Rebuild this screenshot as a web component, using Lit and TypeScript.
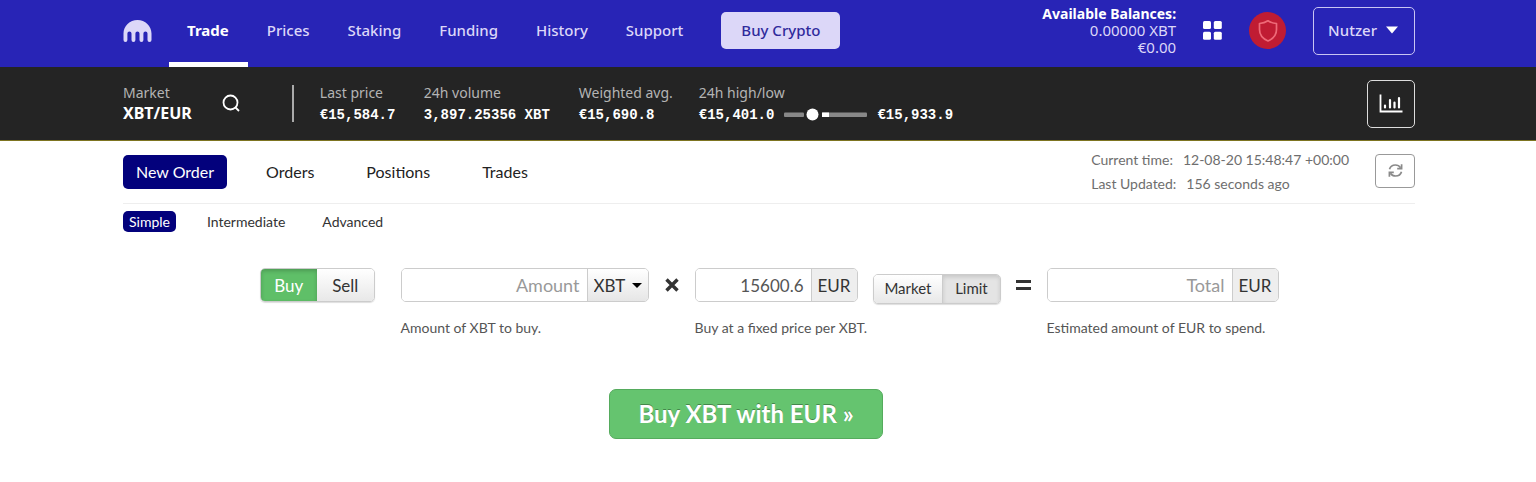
import { LitElement, html, css, svg } from "lit";
import { customElement, state } from "lit/decorators.js";
import { classMap } from "lit/directives/class-map.js";

const krakenLogo = svg`<svg width="29" height="22" viewBox="0 0 29 22" aria-hidden="true">
  <path fill="#dcd7f8" d="M14.500 0C6.800 0 .5 6 .5 13.500V20a1.900 1.900 0 0 0 3.900 0V13.500a2.050 2.050 0 0 1 4.100 0V20a1.950 1.950 0 0 0 3.900 0V13.500a2.050 2.050 0 0 1 4.100 0V20a1.950 1.950 0 0 0 3.900 0V13.500a2.050 2.050 0 0 1 4.100 0V20a1.950 1.950 0 0 0 4 0V13.500C28.500 6 22.200 0 14.500 0z"/></svg>`;

const searchIcon = svg`<svg width="19" height="19" viewBox="0 0 19 19" fill="none" stroke="#fff" stroke-width="1.800" aria-hidden="true">
  <circle cx="8.500" cy="8.500" r="7"/><path d="M13.500 13.500L17 17"/></svg>`;

const appsIcon = svg`<svg width="19" height="19" viewBox="0 0 19 19" fill="#fff" aria-hidden="true">
  <rect width="8" height="8" rx="1.500"/><rect x="10.800" width="8" height="8" rx="1.500"/>
  <rect y="10.800" width="8" height="8" rx="1.500"/><rect x="10.800" y="10.800" width="8" height="8" rx="1.500"/></svg>`;

const shieldIcon = svg`<svg width="20" height="24" viewBox="0 0 20 24" fill="none" stroke="#ee6a78" stroke-width="1.700" stroke-linejoin="round" aria-hidden="true">
  <path d="M10 1.800C7.500 3.400 4.500 4.300 1.500 4.500V10.500C1.500 15.500 5 19.800 10 22C15 19.800 18.500 15.500 18.500 10.500V4.500C15.500 4.300 12.500 3.400 10 1.800z"/></svg>`;

const chartIcon = svg`<svg width="24" height="20" viewBox="0 0 24 20" fill="none" stroke="#fff" stroke-width="1.800" aria-hidden="true">
  <path d="M1.500 .5V17.500H23.500"/><path stroke-width="2.200" stroke-linecap="round" d="M6 11.500V13.500M11 6V13.500M15.500 8.500V13.500M20 4V13.500"/></svg>`;

const refreshIcon = svg`<svg width="15" height="15" viewBox="0 0 15 15" fill="none" stroke="#8a8a8a" stroke-width="1.700" aria-hidden="true">
  <path d="M1.500 6.300C2.300 3.500 4.600 2 7.400 2C9.700 2 11.400 3 12.600 4.800M13.500 8.700C12.700 11.500 10.400 13 7.600 13C5.300 13 3.600 12 2.400 10.200"/>
  <path d="M13.600 1.200V5.600H9.200M1.400 13.800V9.400H5.800"/></svg>`;

const timesIcon = svg`<svg width="14" height="14" viewBox="0 0 14 14" stroke="#333" stroke-width="3.400" aria-label="times" role="img">
  <path d="M1.500 1.500L12.500 12.500M12.500 1.500L1.500 12.500"/></svg>`;

const equalsIcon = svg`<svg width="15" height="11" viewBox="0 0 15 11" fill="#333" aria-label="equals" role="img">
  <rect width="15" height="3"/><rect y="7" width="15" height="3"/></svg>`;

@customElement("app-root")
export class AppRoot extends LitElement {
  static styles = css`
    :host {
      display: block;
      min-height: 100vh;
      background: #fff;
      color: #333;
      font-family: Lato, "Open Sans", sans-serif;
      font-size: 16px;
    }
    * { box-sizing: border-box; }
    a { color: inherit; text-decoration: none; }
    button, input, select { font: inherit; color: inherit; margin: 0; }
    button { cursor: pointer; padding: 0; }
    svg { display: block; flex: none; }
    .bar {
      display: flex;
      align-items: center;
      padding: 0 121px 0 123px;
      white-space: nowrap;
      font-family: "Noto Sans", sans-serif;
    }
    .top { background: #2824b6; height: 67px; color: #dcd7f8; font-size: 15px; font-weight: 500; }
    .home { padding-bottom: 6px; }
    .nav { display: flex; align-self: stretch; align-items: center; margin-left: 17px; }
    .nav-link {
      display: flex;
      align-items: center;
      align-self: stretch;
      padding: 0 19px 2px;
      border-bottom: 5px solid transparent;
    }
    .nav-link.current { color: #fff; font-weight: 700; border-bottom-color: #fff; padding: 0 19px 2px 18px; }
    .crypto {
      height: 37px;
      margin: 0 0 6px 19px;
      padding: 0 20px 2px;
      display: flex;
      align-items: center;
      border-radius: 5px;
      background: #dcd7f8;
      color: #2f2a9c;
    }
    .account { display: flex; align-items: center; gap: 27px; margin: 0 0 6px auto; }
    .balances { text-align: right; line-height: 17px; font-weight: 400; }
    .balances strong, .balances span { display: block; }
    .balances strong { color: #fff; font-size: 14px; }
    .plain { background: none; border: 0; display: flex; }
    .shield {
      width: 37px;
      height: 37px;
      border: 0;
      border-radius: 50%;
      background: #c01c33;
      display: grid;
      place-items: center;
    }
    .user {
      height: 48px;
      padding: 0 16px 2px 14px;
      display: flex;
      align-items: center;
      gap: 9px;
      background: none;
      border: 1px solid #c9c5f3;
      border-radius: 5px;
    }
    .market { background: #242424; height: 74px; border-bottom: 1px solid #7d7420; color: #b4b4b4; font-size: 14px; line-height: 20px; }
    .pairing { padding-bottom: 2px; }
    .pairing strong { display: block; color: #fff; font-size: 16px; }
    .search { margin-left: 30px; }
    .divider { width: 2px; height: 37px; background: #aaa; margin: 0 26px 0 51px; }
    .stats { display: grid; grid-template-columns: 104px 155px 120px auto; margin: 0; }
    .stat dt { line-height: 22px; }
    .stat dd {
      margin: 0;
      display: flex;
      align-items: center;
      gap: 10px;
      color: #fff;
      font-family: "Liberation Mono", monospace;
      font-weight: 700;
      line-height: 22px;
    }
    .chart {
      width: 48px;
      height: 48px;
      margin-left: auto;
      display: grid;
      place-items: center;
      background: none;
      border: 1px solid #ddd;
      border-radius: 5px;
    }
    .page { padding: 0 121px 0 123px; }
    .tabs { display: flex; align-items: center; gap: 26px; height: 63px; border-bottom: 1px solid #eee; }
    .tab { height: 34px; padding: 0 13px 2px; border: 0; border-radius: 5px; background: none; color: #222; white-space: nowrap; }
    .subtabs { display: flex; gap: 25px; padding-top: 7px; }
    .subtab { height: 21px; padding: 0 6px; border: 0; border-radius: 5px; background: none; font-size: 14px; white-space: nowrap; }
    .tab.current, .subtab.current { background: #03017c; color: #fff; }
    .times {
      display: grid;
      margin-left: auto;
      font-size: 14px;
      line-height: 24px;
      color: #6e6e6e;
      white-space: nowrap;
    }
    .times div { display: flex; gap: 10px; }
    .refresh {
      width: 40px;
      height: 34px;
      margin-bottom: 3px;
      display: grid;
      place-items: center;
      background: #fff;
      border: 1px solid #999;
      border-radius: 4px;
    }
    .order { padding-top: 36px; display: grid; justify-items: center; }
    .row { display: flex; align-items: flex-start; font-size: 17px; white-space: nowrap; }
    .pair { display: flex; border: 1px solid #ccc; border-radius: 5px; overflow: hidden; box-shadow: 0 1px 1px #0002; }
    .pair button { border: 0; background: linear-gradient(#fff, #e8e8e8); color: #333; }
    .side { height: 34px; width: 115px; margin-right: 26px; }
    .side button { flex: 1; }
    .side .buy { background: #5fbf68; color: #fff; box-shadow: inset 0 2px 4px #0003; }
    .kind { height: 30px; margin: 6px 0 0 15px; font-size: 15px; width: 128px; }
    .kind button { padding-bottom: 2px; }
    .kind .rest { flex: 70; }
    .kind .limit { flex: 57; background: #e4e4e4; border-left: 1px solid #ccc; box-shadow: inset 0 2px 4px #0002; }
    .field { display: grid; grid-template-columns: 100%; gap: 16px; }
    .amount { width: 248px; }
    .price { width: 163px; }
    .total { width: 232px; }
    .group { display: flex; height: 34px; border: 1px solid #ccc; border-radius: 5px; overflow: hidden; }
    .entry { flex: 1; min-width: 0; border: 0; background: #fff; text-align: right; padding: 0 7px; color: #555; outline: 0; }
    .entry::placeholder { color: #999; opacity: 1; font-size: 18px; }
    .unit { display: flex; align-items: center; padding: 0 6px; background: #eee; border-left: 1px solid #ccc; }
    .pick { position: relative; background: linear-gradient(#fff, #e6e6e6); padding: 0; }
    .pick select { appearance: none; height: 100%; border: 0; background: none; padding: 0 22px 0 6px; outline: 0; }
    .pick svg { position: absolute; right: 6px; top: 14px; pointer-events: none; }
    .hint { font-size: 14px; line-height: 20px; color: #555; }
    .sign { width: 46px; height: 34px; display: grid; place-items: center; }
    .submit {
      height: 50px;
      margin: 51px 46px 0 0;
      padding: 0 28px 2px;
      border: 1px solid #55ab5d;
      border-radius: 7px;
      background: #65c46f;
      color: #fff;
      font-size: 24px;
      font-weight: 700;
      text-shadow: 0 -1px 0 #0005;
    }
  `;

  @state() private tab = "New Order";
  @state() private mode = "Simple";

  private stat(label: string, value: unknown) {
    return html`<div class="stat"><dt>${label}</dt><dd>${value}</dd></div>`;
  }

  render() {
    return html`
      <header class="bar top">
        <a href="#" class="home" aria-label="Home">${krakenLogo}</a>
        <nav class="nav">
          ${["Trade", "Prices", "Staking", "Funding", "History", "Support"].map(
            (name, i) => html`<a href="#" class=${classMap({ "nav-link": true, current: i === 0 })}>${name}</a>`
          )}
          <a href="#" class="crypto">Buy Crypto</a>
        </nav>
        <div class="account">
          <div class="balances"><strong>Available Balances:</strong><span>0.00000 XBT</span><span>€0.00</span></div>
          <button class="plain" aria-label="Apps">${appsIcon}</button>
          <button class="shield" aria-label="Security">${shieldIcon}</button>
          <button class="user">Nutzer
            <svg width="12" height="8" viewBox="0 0 12 8" fill="#fff"><path d="M0 .5H12L6 7.500z"/></svg>
          </button>
        </div>
      </header>
      <section class="bar market">
        <div class="pairing">Market<strong>XBT/EUR</strong></div>
        <button class="plain search" aria-label="Search markets">${searchIcon}</button>
        <span class="divider"></span>
        <dl class="stats">
          ${this.stat("Last price", "€15,584.7")}
          ${this.stat("24h volume", "3,897.25356 XBT")}
          ${this.stat("Weighted avg.", "€15,690.8")}
          ${this.stat("24h high/low", html`<span>€15,401.0</span>
            <svg width="83" height="14" viewBox="0 0 83 14" aria-hidden="true">
              <rect y="4.500" width="20" height="4.500" rx="1" fill="#888"/>
              <rect x="38" y="4.500" width="45" height="4.500" rx="1" fill="#888"/>
              <rect x="38" y="4.500" width="7" height="4.500" fill="#fff"/>
              <circle cx="28.500" cy="6.500" r="6" fill="#fff"/>
            </svg><span>€15,933.9</span>`)}
        </dl>
        <button class="chart" aria-label="Chart">${chartIcon}</button>
      </section>
      <main class="page">
        <div class="tabs">
          ${["New Order", "Orders", "Positions", "Trades"].map(
            (name) => html`<button class=${classMap({ tab: true, current: this.tab === name })} @click=${() => (this.tab = name)}>${name}</button>`
          )}
          <div class="times">
            <div><span>Current time:</span><span>12-08-20 15:48:47 +00:00</span></div>
            <div><span>Last Updated:</span><span>156 seconds ago</span></div>
          </div>
          <button class="refresh" aria-label="Refresh">${refreshIcon}</button>
        </div>
        <div class="subtabs">
          ${["Simple", "Intermediate", "Advanced"].map(
            (name) => html`<button class=${classMap({ subtab: true, current: this.mode === name })} @click=${() => (this.mode = name)}>${name}</button>`
          )}
        </div>
        <form class="order" @submit=${(e: Event) => e.preventDefault()}>
          <div class="row">
            <div class="pair side"><button type="button" class="buy">Buy</button><button type="button">Sell</button></div>
            <div class="field amount">
              <div class="group">
                <input id="amount" class="entry" placeholder="Amount" />
                <span class="unit pick">
                  <select aria-label="Amount currency"><option>XBT</option></select>
                  <svg width="10" height="5" viewBox="0 0 10 5"><path d="M0 0H10L5 5z"/></svg>
                </span>
              </div>
              <label class="hint" for="amount">Amount of XBT to buy.</label>
            </div>
            <span class="sign">${timesIcon}</span>
            <div class="field price">
              <div class="group">
                <input id="price" class="entry" value="15600.6" />
                <span class="unit">EUR</span>
              </div>
              <label class="hint" for="price">Buy at a fixed price per XBT.</label>
            </div>
            <div class="pair kind"><button type="button" class="rest">Market</button><button type="button" class="limit">Limit</button></div>
            <span class="sign">${equalsIcon}</span>
            <div class="field total">
              <div class="group">
                <input id="total" class="entry" placeholder="Total" />
                <span class="unit">EUR</span>
              </div>
              <label class="hint" for="total">Estimated amount of EUR to spend.</label>
            </div>
          </div>
          <button class="submit">Buy XBT with EUR »</button>
        </form>
      </main>
    `;
  }
}
